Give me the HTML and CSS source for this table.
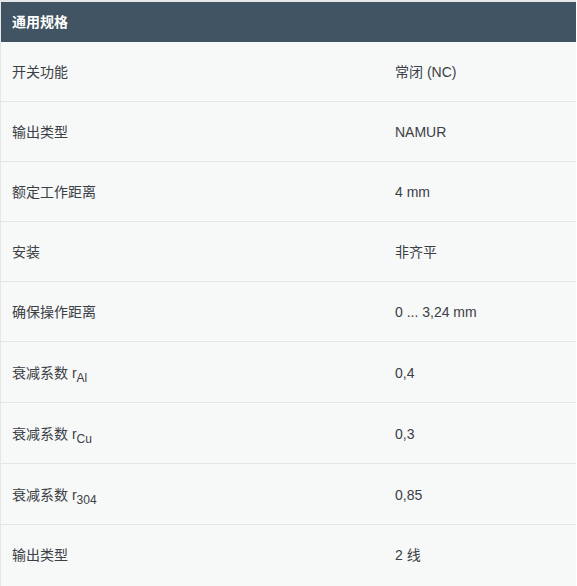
FILE: index.html
```html
<!DOCTYPE html>
<html lang="zh">
<head>
<meta charset="utf-8">
<title>通用规格</title>
<link rel="stylesheet" href="styles.css">
</head>
<body>
<div class="wrap">
  <table class="spec">
    <thead>
      <tr><th colspan="2">通用规格</th></tr>
    </thead>
    <tbody>
      <tr><td class="k">开关功能</td><td class="v">常闭 (NC)</td></tr>
      <tr><td class="k">输出类型</td><td class="v">NAMUR</td></tr>
      <tr><td class="k">额定工作距离</td><td class="v">4 mm</td></tr>
      <tr><td class="k">安装</td><td class="v">非齐平</td></tr>
      <tr><td class="k">确保操作距离</td><td class="v">0 ... 3,24 mm</td></tr>
      <tr class="tall"><td class="k">衰减系数 r<sub>Al</sub></td><td class="v">0,4</td></tr>
      <tr class="tall"><td class="k">衰减系数 r<sub>Cu</sub></td><td class="v">0,3</td></tr>
      <tr class="tall"><td class="k">衰减系数 r<sub>304</sub></td><td class="v">0,85</td></tr>
      <tr class="last"><td class="k">输出类型</td><td class="v">2 线</td></tr>
    </tbody>
  </table>
</div>
</body>
</html>
```
FILE: styles.css
```css
html, body {
  margin: 0;
  padding: 0;
  background: #ffffff;
}
body {
  font-family: "Liberation Sans", Arial, "Noto Sans CJK SC", sans-serif;
  font-size: 14px;
  color: #3a4045;
}
.wrap {
  border-top: 2px solid #e4e6e7;
  border-left: 1px solid #e4e6e7;
  width: 575px;
}
.spec {
  width: 100%;
  border-collapse: collapse;
  background: #f7f8f8;
}
.spec th {
  background: #415463;
  color: #ffffff;
  font-weight: bold;
  text-align: left;
  height: 39px;
  padding: 0 11px;
  line-height: 20px;
  box-sizing: border-box;
}
.spec td {
  height: 20px;
  padding: 20px 12px 19px 11px;
  line-height: 20px;
  border-bottom: 1px solid #e3e5e6;
  vertical-align: middle;
}
.spec thead tr {
  height: 40px;
}
.spec tr.tall td {
  padding-top: 21px;
  padding-bottom: 19px;
}
.spec tr.last td {
  border-bottom: none;
  padding-bottom: 22px;
}
.spec td.k {
  width: 359px;
}
.spec td.v {
  padding-left: 12px;
}
sub {
  font-size: 12px;
  line-height: 0;
  vertical-align: -4px;
}
```
